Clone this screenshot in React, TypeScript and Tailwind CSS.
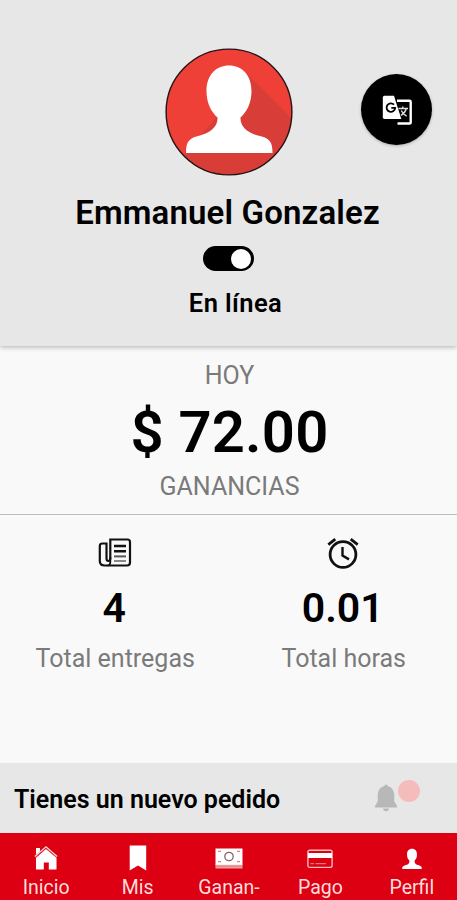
import React from "react";

function Avatar() {
  return (
    <svg viewBox="0 0 128 128" className="h-[128px] w-[128px] shrink-0">
      <defs>
        <clipPath id="face">
          <circle cx="64" cy="64" r="63" />
        </clipPath>
      </defs>
      <g clipPath="url(#face)">
        <rect width="128" height="128" fill="#ef4038" />
        <path d="M80 24L130 74V128H20V104L60 60Z" fill="#d93d37" />
      </g>
      <path
        d="M64 17.500C77 17.500 86.500 27 86.500 43C86.500 55 82 63.500 75.500 69.500C75 79 83 85 93 87.500C104 90 107.500 93 107.500 105H21C21 93 24.500 90 35 87.500C45 85 53 79 52.500 69.500C46 63.500 41.500 55 41.500 43C41.500 27 51 17.500 64 17.500Z"
        fill="#fff"
      />
      <circle cx="64" cy="64" r="62.900" fill="none" stroke="#241415" strokeWidth="1.400" />
    </svg>
  );
}

function TranslateIcon() {
  return (
    <svg viewBox="0 0 30 30" className="h-[30px] w-[30px]" fill="none">
      <path d="M15 5.800H27.500Q28.700 5.800 28.700 7V27.200Q28.700 28.500 27.400 28.500H15.500" stroke="#fff" strokeWidth="2.400" />
      <path d="M2.500 .8H12L19.300 24H2.500Q.8 24 .8 22.300V2.500Q.8 .8 2.500 .8Z" fill="#fff" />
      <path d="M12 9.600A4.300 4.300 0 1 0 13.200 12.800H9.300" stroke="#000" strokeWidth="1.800" />
      <path d="M16.500 13.500H26M20.800 11.500V13.500M24.200 13.500C23.600 16.800 21.300 18.800 19 20.300M19.300 15.500C20.300 18.200 22.600 20 24.600 21.200" stroke="#ddd" strokeWidth="1.400" />
    </svg>
  );
}

function NewsIcon() {
  return (
    <svg viewBox="0 0 34 30" className="ml-[2px] h-[30px] w-[34px]" fill="none" stroke="#111">
      <path d="M12.300 1.500H29.500Q32 1.500 32 4V24.500Q32 27.500 29 27.500H6.500Q1.800 27.500 1.800 23V8Q1.800 5.500 4.500 5.500H8.500V20.500Q8.500 23 10.400 23Q12.300 23 12.300 20.500Z" strokeWidth="2.200" />
      <path d="M12.300 19V24.500Q12 27.500 9.500 27.500" strokeWidth="1.800" />
      <path d="M16 8H28M16 13.200H28" strokeWidth="2.600" />
      <path d="M16 18.400H28" strokeWidth="2" stroke="#555" />
      <path d="M16 23H28" strokeWidth="2" stroke="#888" />
    </svg>
  );
}

function AlarmIcon() {
  return (
    <svg viewBox="0 0 34 32" className="h-[32px] w-[34px]" fill="none" stroke="#111">
      <circle cx="17" cy="17.500" r="12.900" strokeWidth="2.800" />
      <path d="M16.500 10V18.500L23 22.400" strokeWidth="2.400" />
      <path d="M2.300 7.600L9.300 2.200M24.700 2.200L31.700 7.600" strokeWidth="2.800" />
    </svg>
  );
}

function BellIcon() {
  return (
    <svg viewBox="0 0 24 28" className="h-[28px] w-[24px]" fill="#b7b8b8">
      <path d="M12 .5Q13.500 .5 13.700 2C19 3.300 20.300 8 20.300 12V17.500L23 22V23.500H1V22L3.700 17.500V12C3.700 8 5 3.300 10.300 2Q10.500 .5 12 .5Z" />
      <path d="M9 24.500H15Q14.500 27.300 12 27.300Q9.500 27.300 9 24.500Z" />
    </svg>
  );
}

function HomeIcon() {
  return (
    <svg viewBox="0 0 24 26" className="h-[26px] w-[24px]" fill="#fff">
      <path d="M2 3H6V6.500L2 10Z" />
      <path d="M12 4L22.500 12.800V24.500H14.800V17.500H9.800V24.500H2V12.800Z" />
      <path d="M.8 11.500L12 1.800L23.200 11.500" fill="none" stroke="#ffd9da" strokeWidth="1.200" />
      <path d="M1.600 12.300L12 3.400L22.400 12.300" fill="none" stroke="#e0585f" strokeWidth=".6" />
    </svg>
  );
}

function BookmarkIcon() {
  return (
    <svg viewBox="0 0 18 26" className="h-[26px] w-[18px]" fill="#fff">
      <path d="M.7 .5H17.200V25.500L9 20.500L.7 25.500Z" />
    </svg>
  );
}

function CashIcon() {
  return (
    <svg viewBox="0 0 28 22" className="mt-[2px] h-[22px] w-[28px]">
      <path d="M.5 16H27.500V20.500H.5Z" fill="#efa0a2" />
      <path d="M.5 .5H27.500V16.800H.5Z" fill="#fff" />
      <path d="M.5 18.400H27.500" stroke="#cf7479" strokeWidth=".6" />
      <circle cx="14" cy="8.500" r="4.200" fill="none" stroke="#8c6266" strokeWidth="1.300" />
      <path d="M3 3.300H6M22 3.300H25M3 13.600H6M22 13.600H25" stroke="#d98387" strokeWidth="1.200" />
    </svg>
  );
}

function CardIcon() {
  return (
    <svg viewBox="0 0 26 20" className="mt-[2px] h-[20px] w-[26px]" fill="none">
      <rect x=".9" y="1.200" width="24.200" height="17.200" rx="1.800" stroke="#fbb9bc" strokeWidth="1.400" />
      <path d="M1 6.500H25" stroke="#fff" strokeWidth="5" />
      <path d="M3.500 14.700H7M8.500 14.700H19" stroke="#f38d92" strokeWidth="1" />
    </svg>
  );
}

function PersonIcon() {
  return (
    <svg viewBox="0 0 20 22" className="mt-[1px] h-[22px] w-[20px]" fill="#fff">
      <path d="M10 .8C13.200 .8 15 3 15 6.500C15 9.500 14 11.200 12.600 12.500C12.400 15.500 13.500 16.200 16 17C19 17.900 19.800 18.500 19.800 21H.2C.2 18.500 1 17.900 4 17C6.500 16.200 7.600 15.500 7.400 12.500C6 11.200 5 9.500 5 6.500C5 3 6.800 .8 10 .8Z" />
    </svg>
  );
}

function Stat({ icon, value, label }: { icon: React.ReactNode; value: string; label: string }) {
  return (
    <div className="flex flex-1 flex-col items-center">
      <div className="flex h-[32px] items-center">{icon}</div>
      <div className="mt-[19px] h-10 text-[41px] leading-10 font-semibold text-black">{value}</div>
      <div className="mt-[16px] pl-[2px] text-[25px] leading-[30px] text-[#7a7a7a]">{label}</div>
    </div>
  );
}

function Tab({ icon, label }: { icon: React.ReactNode; label: string }) {
  return (
    <button className="flex flex-1 basis-0 flex-col items-center pl-[1px] text-[#ffdcdd]">
      <span className="flex h-[26px] items-center justify-center">{icon}</span>
      <span className="mt-[5px] text-[19.5px] leading-6">{label}</span>
    </button>
  );
}

export default function App() {
  return (
    <div className="flex h-[900px] w-[457px] flex-col overflow-hidden bg-[#f9f9f9] font-[Roboto,sans-serif]">
      <header className="relative z-10 flex h-[346px] shrink-0 flex-col items-center bg-[#e7e7e7] pt-[48px] text-black shadow-[0_1px_5px_rgba(0,0,0,0.3)]">
        <Avatar />
        <button className="absolute top-[74px] right-[25px] flex h-[71px] w-[71px] items-center justify-center rounded-full bg-black shadow-[0_1px_3px_rgba(0,0,0,0.25)]">
          <TranslateIcon />
        </button>
        <h1 className="mt-[17px] pr-[2px] text-[33px] leading-10 font-semibold tracking-[0.15px] whitespace-nowrap">Emmanuel Gonzalez</h1>
        <div className="mt-[13px] flex h-[25px] w-[51px] items-center justify-end rounded-full bg-black pr-[3px]">
          <span className="h-5 w-5 rounded-full bg-white" />
        </div>
        <p className="mt-[17px] ml-[14px] text-[25.5px] leading-[30px] font-semibold tracking-[0.4px]">En línea</p>
      </header>

      <section className="flex h-[169px] shrink-0 flex-col items-center border-b border-[#bdbdbd] pt-[15px] pl-[2px]">
        <p className="text-[25px] leading-[30px] text-[#7a7a7a]">HOY</p>
        <p className="mt-[9px] text-[58px] leading-[64px] font-semibold tracking-[0.2px] text-black">$ 72.00</p>
        <p className="mt-[8px] text-[25px] leading-[30px] text-[#7a7a7a]">GANANCIAS</p>
      </section>

      <section className="flex flex-1 pt-[22px]">
        <Stat icon={<NewsIcon />} value="4" label="Total entregas" />
        <Stat icon={<AlarmIcon />} value="0.01" label="Total horas" />
      </section>

      <section className="flex h-[70px] shrink-0 items-center justify-between bg-[#e7e7e7] pr-[37px] pl-[14px]">
        <p className="mt-[4px] text-[25px] leading-[30px] font-semibold text-black">Tienes un nuevo pedido</p>
        <div className="flex">
          <BellIcon />
          <span className="-mt-[4px] h-[22px] w-[22px] rounded-full bg-[#f4bcbb]" />
        </div>
      </section>

      <nav className="flex h-[67px] shrink-0 items-start bg-[#dc0012] pt-3">
        <Tab icon={<HomeIcon />} label="Inicio" />
        <Tab icon={<BookmarkIcon />} label="Mis" />
        <Tab icon={<CashIcon />} label="Ganan-" />
        <Tab icon={<CardIcon />} label="Pago" />
        <Tab icon={<PersonIcon />} label="Perfil" />
      </nav>
    </div>
  );
}
